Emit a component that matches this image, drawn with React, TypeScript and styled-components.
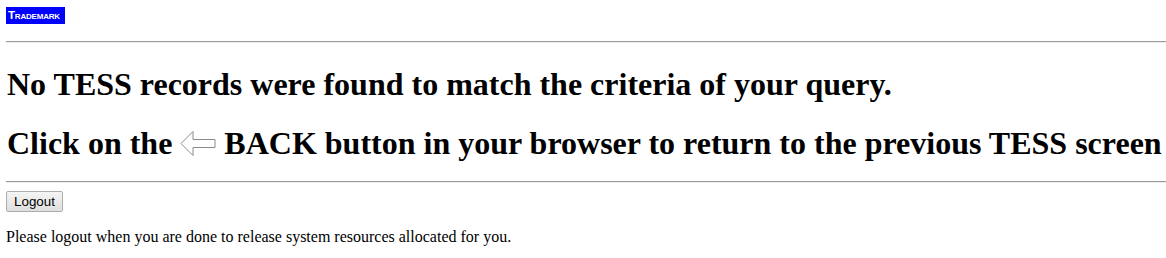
import { createGlobalStyle } from "styled-components";
import styled from "styled-components";

const GlobalStyle = createGlobalStyle`
  body {
    margin: 0;
    padding: 7px 0 0 6px;
    background: #ffffff;
    font-family: "Liberation Serif", "Times New Roman", serif;
    font-size: 16px;
    color: #000;
  }
`;

const Logo = styled.div`
  display: inline-block;
  vertical-align: top;
  background: #0000ff;
  color: #ffffff;
  font-family: "Liberation Sans", Arial, sans-serif;
  font-weight: bold;
  font-size: 11.5px;
  font-variant: small-caps;
  letter-spacing: -0.2px;
  line-height: 17px;
  padding: 0 2px;
  width: 55px;
  box-sizing: content-box;
  white-space: nowrap;
`;

const Rule = styled.hr<{ $top: number; $bottom: number }>`
  border: 0;
  border-top: 1px solid #9a9a9a;
  border-bottom: 1px solid #eeeeee;
  height: 0;
  margin: ${(p) => p.$top}px 0 ${(p) => p.$bottom}px 0;
`;

const Heading = styled.h1<{ $top: number }>`
  font-size: 32px;
  font-weight: bold;
  margin: ${(p) => p.$top}px 0 0 1px;
  white-space: nowrap;
`;

const Arrow = styled.svg`
  width: 36px;
  height: 27px;
  vertical-align: -3px;
`;

const LogoutButton = styled.button`
  font-family: "Liberation Sans", Arial, sans-serif;
  font-size: 13.33px;
  padding: 0 6px;
  height: 21px;
  width: 57px;
  border: 1px solid #adadad;
  border-radius: 2px;
  background: linear-gradient(#f5f5f5, #dedede);
  color: #000;
`;

const Note = styled.p`
  font-size: 16px;
  margin: 16px 0 0 0;
`;

export default function App() {
  return (
    <>
      <GlobalStyle />
      <Logo>Trademark</Logo>
      <Rule $top={16} $bottom={0} />
      <Heading $top={23}>No TESS records were found to match the criteria of your query.</Heading>
      <Heading $top={22}>
        Click on the{" "}
        <Arrow viewBox="0 0 36 27">
          <polygon
            points="1,13.5 13,1.5 13,9.5 35,9.5 35,17.5 13,17.5 13,25.5"
            fill="#fff"
            stroke="#8a8a8a"
            strokeWidth="1"
            strokeLinejoin="miter"
          />
        </Arrow>{" "}
        BACK button in your browser to return to the previous TESS screen
      </Heading>
      <Rule $top={19} $bottom={8} />
      <LogoutButton>Logout</LogoutButton>
      <Note>Please logout when you are done to release system resources allocated for you.</Note>
    </>
  );
}
